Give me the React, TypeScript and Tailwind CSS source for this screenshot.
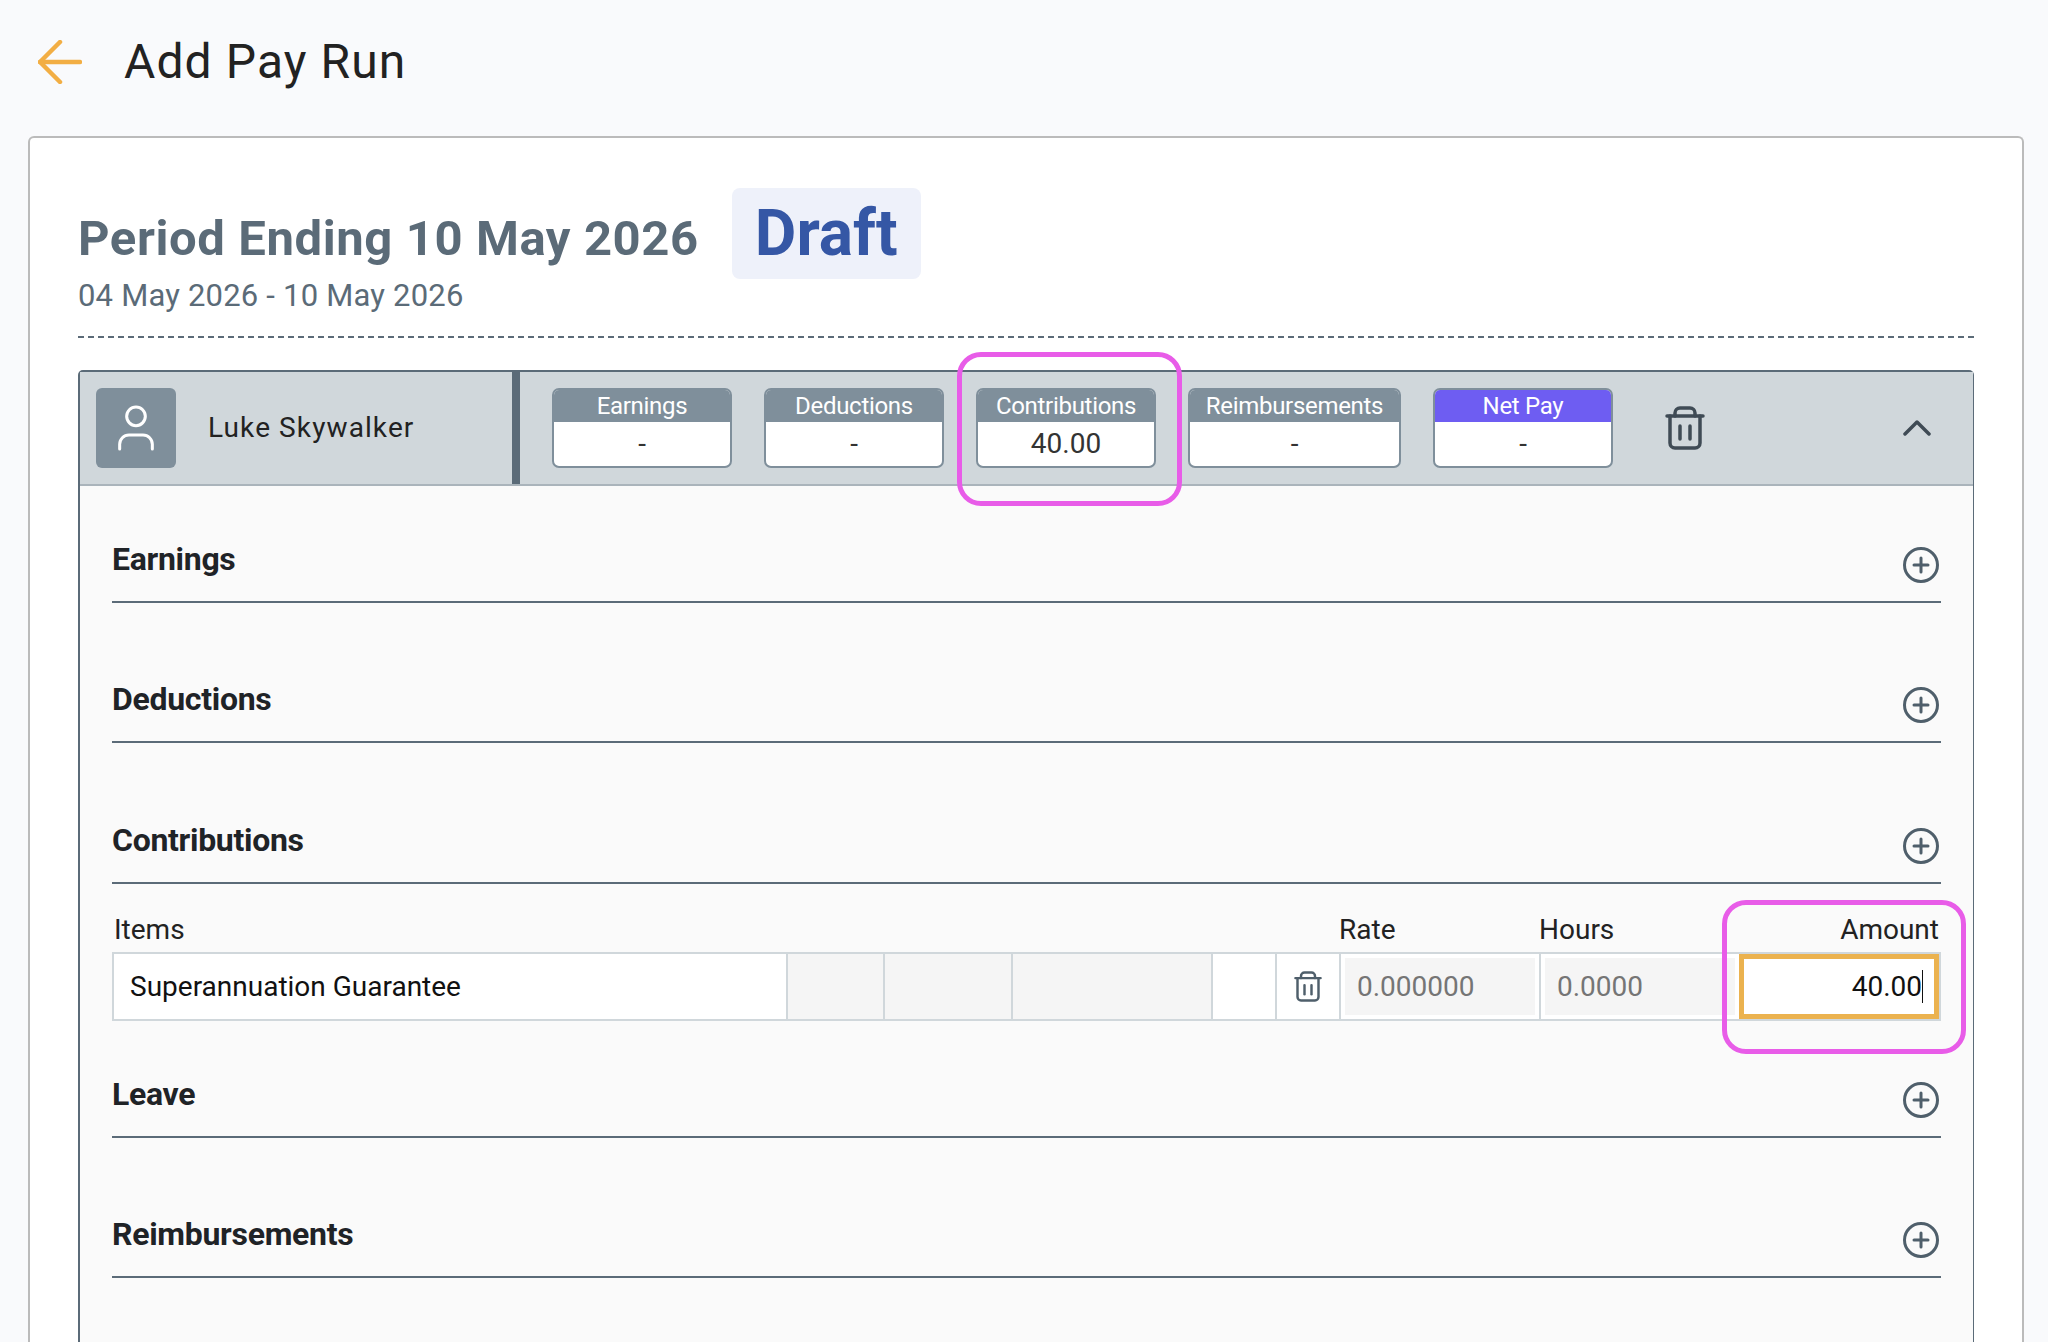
import { User } from 'lucide-react';

const summary = [
    { label: 'Earnings', value: '-', width: 'w-[180px]', head: 'bg-[#7f8f9b]' },
    { label: 'Deductions', value: '-', width: 'w-[180px]', head: 'bg-[#7f8f9b]' },
    { label: 'Contributions', value: '40.00', width: 'w-[180px]', head: 'bg-[#7f8f9b]', marked: true },
    { label: 'Reimbursements', value: '-', width: 'w-[213px]', head: 'bg-[#7f8f9b]' },
    { label: 'Net Pay', value: '-', width: 'w-[180px]', head: 'bg-[#6e5df2]' },
];

const rowGrid = 'grid grid-cols-[672px_97px_128px_200px_64px_64px_200px_200px_200px]';

function TrashIcon({ className }: { className: string }) {
    return (
        <svg viewBox="0 0 40 44" fill="none" stroke="currentColor" strokeWidth="3.5" strokeLinecap="round" strokeLinejoin="round" className={className}>
            <path d="M2 10H38" />
            <path d="M5 10V37a5 5 0 0 0 5 5H30a5 5 0 0 0 5-5V10" />
            <path d="M10 10V7a5 5 0 0 1 5-5H25a5 5 0 0 1 5 5v3" />
            <path d="M15 20V33" />
            <path d="M25 20V33" />
        </svg>
    );
}

function PlusIcon() {
    return (
        <svg viewBox="0 0 36 36" fill="none" stroke="#4f5f6b" strokeWidth="3" strokeLinecap="round" className="w-[36px] h-[36px]">
            <circle cx="18" cy="18" r="16.5" />
            <path d="M18 11V25" />
            <path d="M11 18H25" />
        </svg>
    );
}

function SectionHead({ title, className }: { title: string; className: string }) {
    return (
        <div className={`flex justify-between h-[82px] pt-[20px] border-b-2 border-[#5b6b78] ${className}`}>
            <h3 className="text-[32px] leading-[36px] font-bold tracking-[-0.3px] text-[#1f2327]">{title}</h3>
            <div className="pt-[6px] pr-[2px]">
                <PlusIcon />
            </div>
        </div>
    );
}

export default function App() {
    return (
        <div className="w-[2048px] h-[1342px] overflow-hidden bg-[#f9fafc] font-['Roboto',sans-serif]">
            <header className="flex items-center h-[136px] pb-[12px] pl-[38px]">
                <svg viewBox="0 0 44 44" fill="none" stroke="#f2ae44" strokeWidth="4.5" strokeLinecap="round" strokeLinejoin="round" className="w-[44px] h-[44px]">
                    <path d="M42 22H2" />
                    <path d="M22 2L2 22L22 42" />
                </svg>
                <h1 className="ml-[42px] text-[48px] leading-[56px] tracking-[1.1px] text-[#222]">Add Pay Run</h1>
            </header>

            <main className="ml-[28px] w-[1996px] h-[1206px] bg-white border-x-2 border-t-2 border-[#bbbbbb] rounded-t-[6px] px-[48px] pt-[50px]">
                <div className="flex items-start h-[91px]">
                    <h2 className="pt-[23px] text-[49px] leading-[56px] font-bold tracking-[0.6px] text-[#5b6b78]">Period Ending 10 May 2026</h2>
                    <div className="ml-[33px] w-[189px] h-[91px] rounded-[8px] bg-[#eef1fa] flex items-center justify-center">
                        <span className="text-[64px] leading-[72px] font-bold text-[#3557a5]">Draft</span>
                    </div>
                </div>
                <p className="-mt-[2px] text-[31px] leading-[38px] tracking-[0.2px] text-[#5b6b78]">04 May 2026 - 10 May 2026</p>
                <div className="mt-[21px] border-t-2 border-dashed border-[#5b6b78]" />

                <section className="mt-[32px] h-[1000px] bg-[#fafafa] border-l-2 border-r border-t-2 border-[#5b6b78] rounded-t-[5px]">
                    <div className="flex h-[114px] bg-[#d0d7db] border-b-2 border-[#aab4bb]">
                        <div className="flex items-center w-[440px] h-full pl-[16px] border-r-8 border-[#5b6b78]">
                            <div className="flex items-center justify-center w-[80px] h-[80px] rounded-[6px] bg-[#7f8f9b]">
                                <User size={56} strokeWidth={1.3} color="#ffffff" />
                            </div>
                            <span className="ml-[32px] text-[28px] tracking-[1.1px] text-[#222]">Luke Skywalker</span>
                        </div>
                        <div className="flex items-center flex-1 pl-[32px] pr-[42px]">
                            <div className="flex gap-[32px]">
                                {summary.map((item) => (
                                    <div key={item.label} className={`relative h-[80px] ${item.width}`}>
                                        <div className="h-full overflow-hidden rounded-[7px] border-2 border-[#7f8f9b] bg-white">
                                            <div className={`h-[32px] flex items-center justify-center text-[24px] tracking-[-0.3px] text-white ${item.head}`}>{item.label}</div>
                                            <div className="h-[44px] flex items-center justify-center text-[28px] text-[#333]">{item.value}</div>
                                        </div>
                                        {item.marked && (
                                            <div className="absolute -left-[19px] -right-[26px] -top-[36px] -bottom-[38px] border-[5px] border-[#e85ce8] rounded-[24px] pointer-events-none" />
                                        )}
                                    </div>
                                ))}
                            </div>
                            <TrashIcon className="ml-[52px] w-[40px] h-[44px] text-[#3f4b55]" />
                            <svg viewBox="0 0 28 16" fill="none" stroke="#3f4b55" strokeWidth="3.5" strokeLinecap="round" strokeLinejoin="round" className="ml-auto w-[28px] h-[16px]">
                                <path d="M2 14L14 2L26 14" />
                            </svg>
                        </div>
                    </div>

                    <div className="px-[32px]">
                        <SectionHead title="Earnings" className="mt-[35px]" />
                        <SectionHead title="Deductions" className="mt-[58px]" />
                        <SectionHead title="Contributions" className="mt-[59px]" />

                        <div className={`${rowGrid} h-[68px] items-end pl-[2px] pb-[5px] text-[28px] leading-[34px] text-[#222]`}>
                            <span>Items</span>
                            <span className="col-start-7">Rate</span>
                            <span>Hours</span>
                            <span className="text-right">Amount</span>
                        </div>
                        <div className={`${rowGrid} h-[69px] border-2 border-[#d0d7db] text-[28px]`}>
                            <div className="flex items-center pl-[16px] bg-white text-[#111]">Superannuation Guarantee</div>
                            <div className="bg-[#f5f5f5] border-l-2 border-[#d0d7db]" />
                            <div className="bg-[#f5f5f5] border-l-2 border-[#d0d7db]" />
                            <div className="bg-[#f5f5f5] border-l-2 border-[#d0d7db]" />
                            <div className="bg-white border-l-2 border-[#d0d7db]" />
                            <div className="flex items-center justify-center bg-white border-l-2 border-[#d0d7db]">
                                <TrashIcon className="w-[28px] h-[31px] text-[#4f5f6b]" />
                            </div>
                            <div className="flex bg-white border-l-2 border-[#d0d7db] p-[4px]">
                                <div className="flex items-center flex-1 pl-[12px] bg-[#f5f5f5] text-[#757575]">0.000000</div>
                            </div>
                            <div className="flex bg-white border-l-2 border-[#d0d7db] p-[4px]">
                                <div className="flex items-center flex-1 pl-[12px] bg-[#f5f5f5] text-[#757575]">0.0000</div>
                            </div>
                            <div className="relative">
                                <div className="flex items-center justify-end h-full pr-[11px] bg-white border-[5px] border-[#ebb24f] text-[#111]">
                                    40.00
                                    <span className="w-px h-[33px] bg-[#111]" />
                                </div>
                                <div className="absolute -left-[17px] -right-[27px] -top-[54px] -bottom-[35px] border-[5px] border-[#e85ce8] rounded-[24px] pointer-events-none" />
                            </div>
                        </div>

                        <SectionHead title="Leave" className="mt-[35px]" />
                        <SectionHead title="Reimbursements" className="mt-[58px]" />
                    </div>
                </section>
            </main>
        </div>
    );
}
